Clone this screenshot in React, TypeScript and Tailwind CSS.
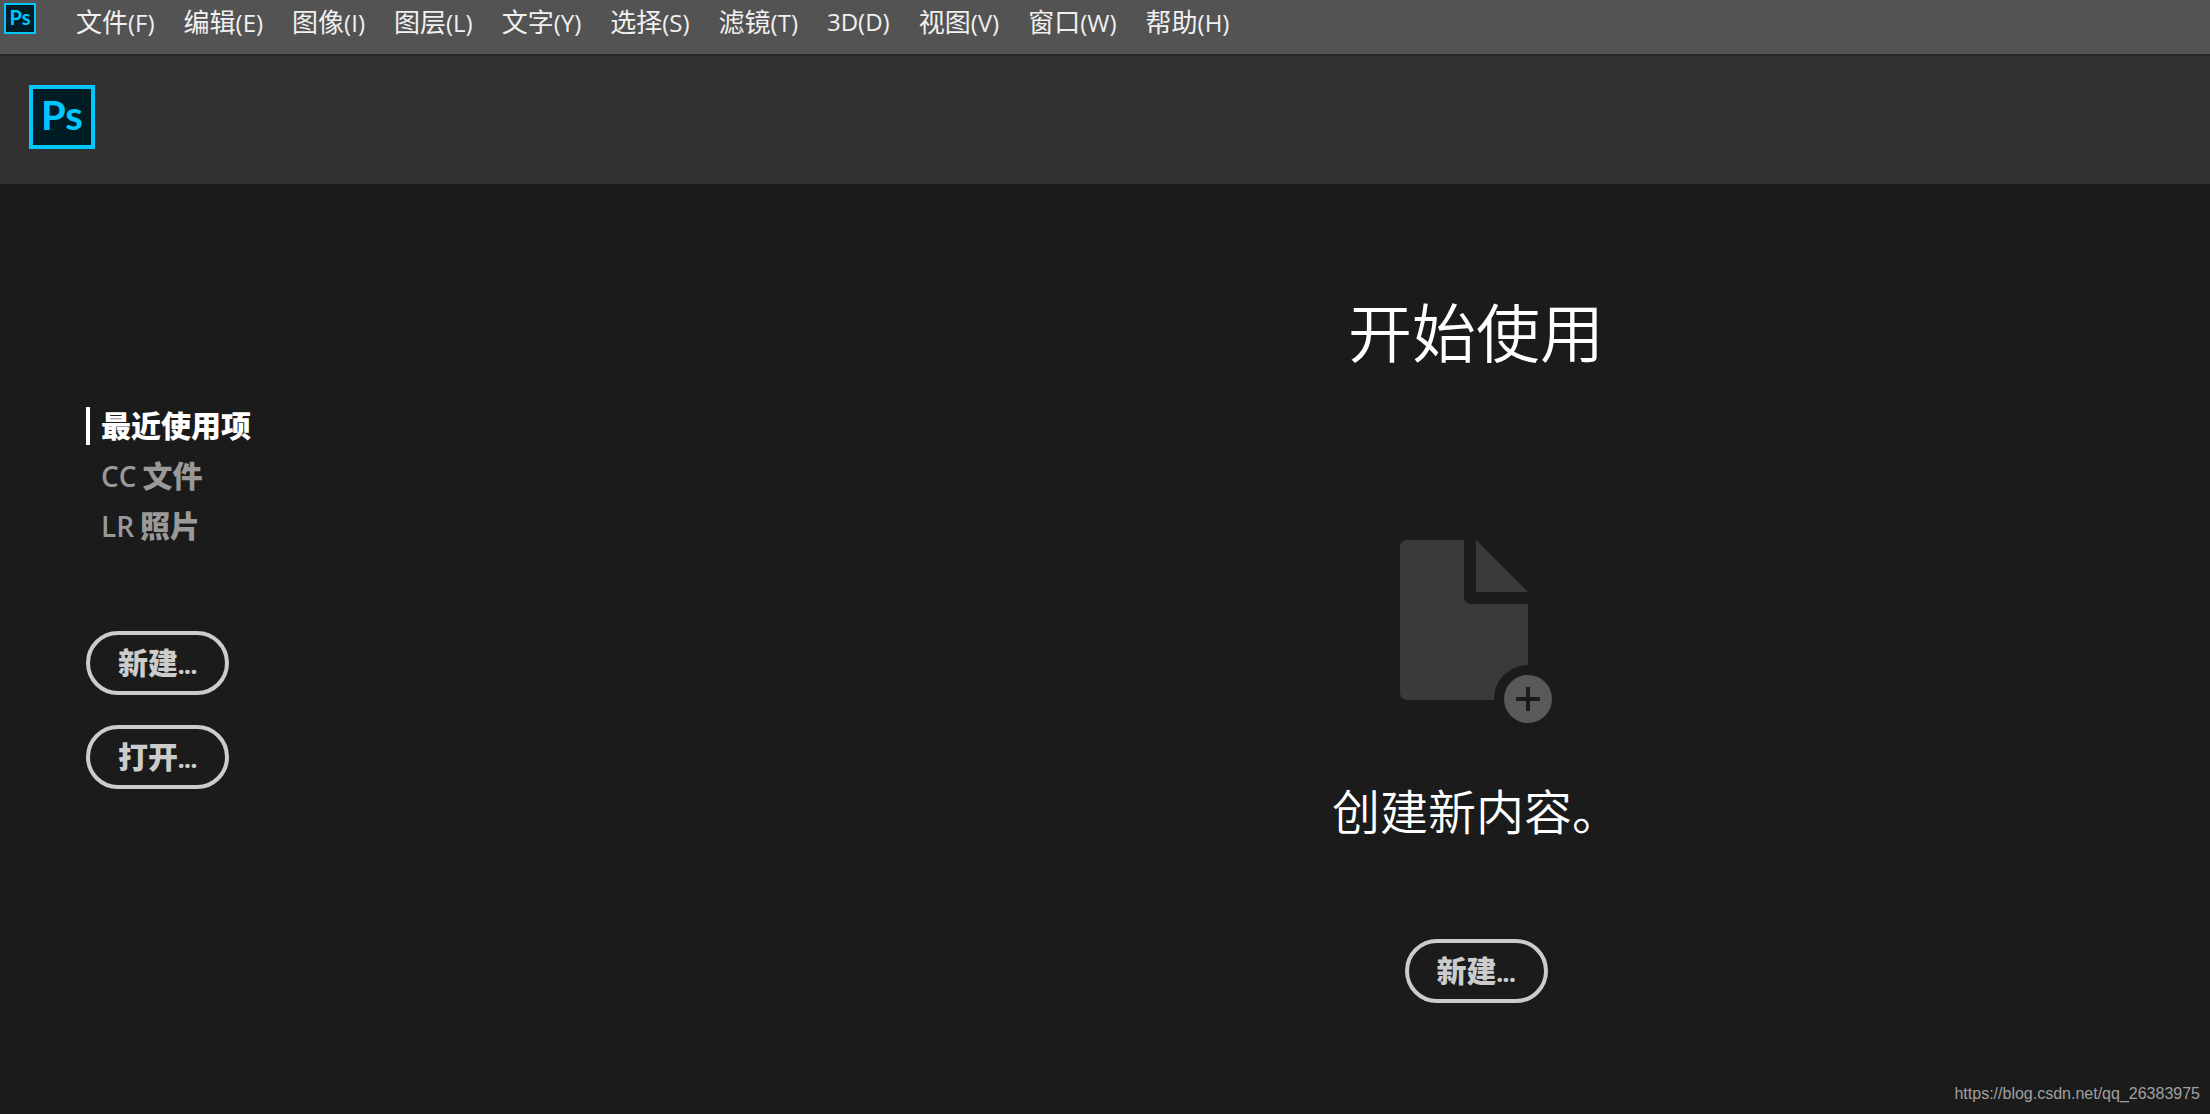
const menus = [
  { name: "文件", key: "(F)" },
  { name: "编辑", key: "(E)" },
  { name: "图像", key: "(I)" },
  { name: "图层", key: "(L)" },
  { name: "文字", key: "(Y)" },
  { name: "选择", key: "(S)" },
  { name: "滤镜", key: "(T)" },
  { name: "", key: "3D(D)" },
  { name: "视图", key: "(V)" },
  { name: "窗口", key: "(W)" },
  { name: "帮助", key: "(H)" },
];

const sources = [
  { prefix: "", label: "最近使用项" },
  { prefix: "CC", label: "文件" },
  { prefix: "LR", label: "照片" },
];

function PillButton({ label }: { label: string }) {
  return (
    <button
      type="button"
      className="flex h-16 w-[143px] items-center justify-center rounded-full border-4 border-[#cccccc] text-[30px] leading-none font-black text-[#cccccc]"
    >
      <span>
        {label}
        <span className="text-[22px]">...</span>
      </span>
    </button>
  );
}

function NewDocumentIcon() {
  return (
    <svg width="152" height="184" viewBox="0 0 152 184" aria-hidden="true">
      <path
        d="M8 0H64V56Q64 64 72 64H128V125A34 34 0 0 0 94 160H8Q0 160 0 152V8Q0 0 8 0Z"
        fill="#3a3a3a"
      />
      <path d="M76 0L128 52H76Z" fill="#3a3a3a" />
      <circle cx="128" cy="159" r="24" fill="#58595b" />
      <path d="M128 147V171M116 159H140" stroke="#1b1b1b" strokeWidth="4" />
    </svg>
  );
}

export default function App() {
  return (
    <div className="flex min-h-screen flex-col bg-[#1b1b1b] font-['Open_Sans','Noto_Sans_CJK_SC',sans-serif] text-white">
      <nav className="flex h-14 items-start border-b-2 border-[#262626] bg-[#535353] pl-1 text-[#f0f0f0]">
        <div className="mt-[3px] mr-10 flex h-[31px] w-8 items-center justify-center border-2 border-[#00c8ff] bg-[#001d26] pb-[3px] font-['Lato',sans-serif] text-xl leading-none font-bold text-[#00c8ff]">
          Ps
        </div>
        <div className="flex h-11 items-center gap-[29px]">
          {menus.map((menu) => (
            <button type="button" key={menu.key} className="flex items-baseline text-2xl leading-8">
              {menu.name && <span className="text-[26px]">{menu.name}</span>}
              <span>{menu.key}</span>
            </button>
          ))}
        </div>
      </nav>

      <header className="flex h-32 items-start bg-[#323232] pt-[29px] pl-[29px]">
        <div className="flex h-16 w-[66px] items-center justify-center border-4 border-[#00c8ff] bg-[#001d26] pb-1 font-['Lato',sans-serif] text-[40px] leading-none font-bold text-[#00c8ff]">
          Ps
        </div>
      </header>

      <div className="grid flex-1 grid-cols-[742px_1fr]">
        <aside className="pt-[217px] pl-[86px]">
          <ul>
            {sources.map((source, i) => (
              <li key={source.label} className="flex h-[50px] items-center">
                <button
                  type="button"
                  className={
                    i === 0
                      ? "flex h-[38px] items-center border-l-4 border-white pl-[11px] text-[30px] leading-none font-black"
                      : "flex h-[38px] items-center border-l-4 border-transparent pl-[11px] text-[30px] leading-none font-black text-[#999999]"
                  }
                >
                  <span className="flex items-baseline gap-1.5">
                    {source.prefix && (
                      <span className="text-[28px] font-semibold">{source.prefix}</span>
                    )}
                    <span>{source.label}</span>
                  </span>
                </button>
              </li>
            ))}
          </ul>
          <div className="mt-20 flex flex-col gap-[30px]">
            <PillButton label="新建" />
            <PillButton label="打开" />
          </div>
        </aside>

        <main className="flex flex-col items-center pt-[109px]">
          <h1 className="text-[64px] leading-[80px] font-[350]">开始使用</h1>
          <div className="mt-[167px]">
            <NewDocumentIcon />
          </div>
          <p className="mt-[58px] text-[48px] leading-[60px] font-[350]">创建新内容。</p>
          <div className="mt-[97px]">
            <PillButton label="新建" />
          </div>
        </main>
      </div>

      <footer className="flex justify-end pr-[10px] pb-2 font-['Liberation_Sans',sans-serif] text-base leading-6 text-[#a0a0a0]">
        <a href="https://blog.csdn.net/qq_26383975">https://blog.csdn.net/qq_26383975</a>
      </footer>
    </div>
  );
}
